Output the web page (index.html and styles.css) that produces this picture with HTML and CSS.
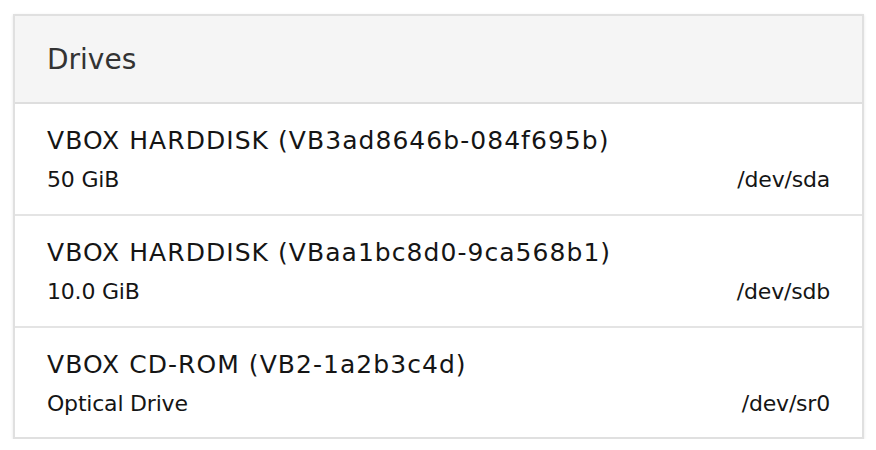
FILE: index.html
```html
<!DOCTYPE html>
<html>
<head>
<meta charset="utf-8">
<link rel="stylesheet" href="styles.css">
</head>
<body>
<div class="card">
  <div class="card-header">Drives</div>
  <ul class="drives">
    <li class="drive">
      <div class="drive-name">VBOX HARDDISK (VB3ad8646b-084f695b)</div>
      <div class="drive-meta"><span>50 GiB</span><span>/dev/sda</span></div>
    </li>
    <li class="drive">
      <div class="drive-name">VBOX HARDDISK (VBaa1bc8d0-9ca568b1)</div>
      <div class="drive-meta"><span>10.0 GiB</span><span>/dev/sdb</span></div>
    </li>
    <li class="drive">
      <div class="drive-name">VBOX CD-ROM (VB2-1a2b3c4d)</div>
      <div class="drive-meta"><span>Optical Drive</span><span>/dev/sr0</span></div>
    </li>
  </ul>
</div>
</body>
</html>
```
FILE: styles.css
```css
html, body {
  margin: 0;
  padding: 0;
  background: #ffffff;
}
body {
  padding: 14px 12px 0 13px;
  font-family: "DejaVu Sans", "Liberation Sans", sans-serif;
  color: #151515;
}
.card {
  border: 2px solid #e0e0e0;
  box-shadow: 0 1px 3px rgba(0,0,0,0.10);
  background: #fff;
  height: 425px;
  box-sizing: border-box;
}
.card-header {
  background: #f5f5f5;
  height: 88px;
  box-sizing: border-box;
  border-bottom: 2px solid #dedede;
  padding: 0 32px;
  display: flex;
  align-items: center;
  font-size: 28px;
  color: #333;
}
.drives {
  list-style: none;
  margin: 0;
  padding: 0;
}
.drive {
  height: 112px;
  box-sizing: border-box;
  border-bottom: 2px solid #e4e4e4;
  padding: 20px 32px 0 32px;
  display: flex;
  flex-direction: column;
  gap: 7px;
}
.drive:last-child {
  border-bottom: none;
}
.drive-name {
  font-size: 25px;
  line-height: 34px;
  letter-spacing: 1.05px;
}
.drive-meta {
  display: flex;
  justify-content: space-between;
  font-size: 22px;
  line-height: 30px;
  letter-spacing: -0.2px;
}
```
